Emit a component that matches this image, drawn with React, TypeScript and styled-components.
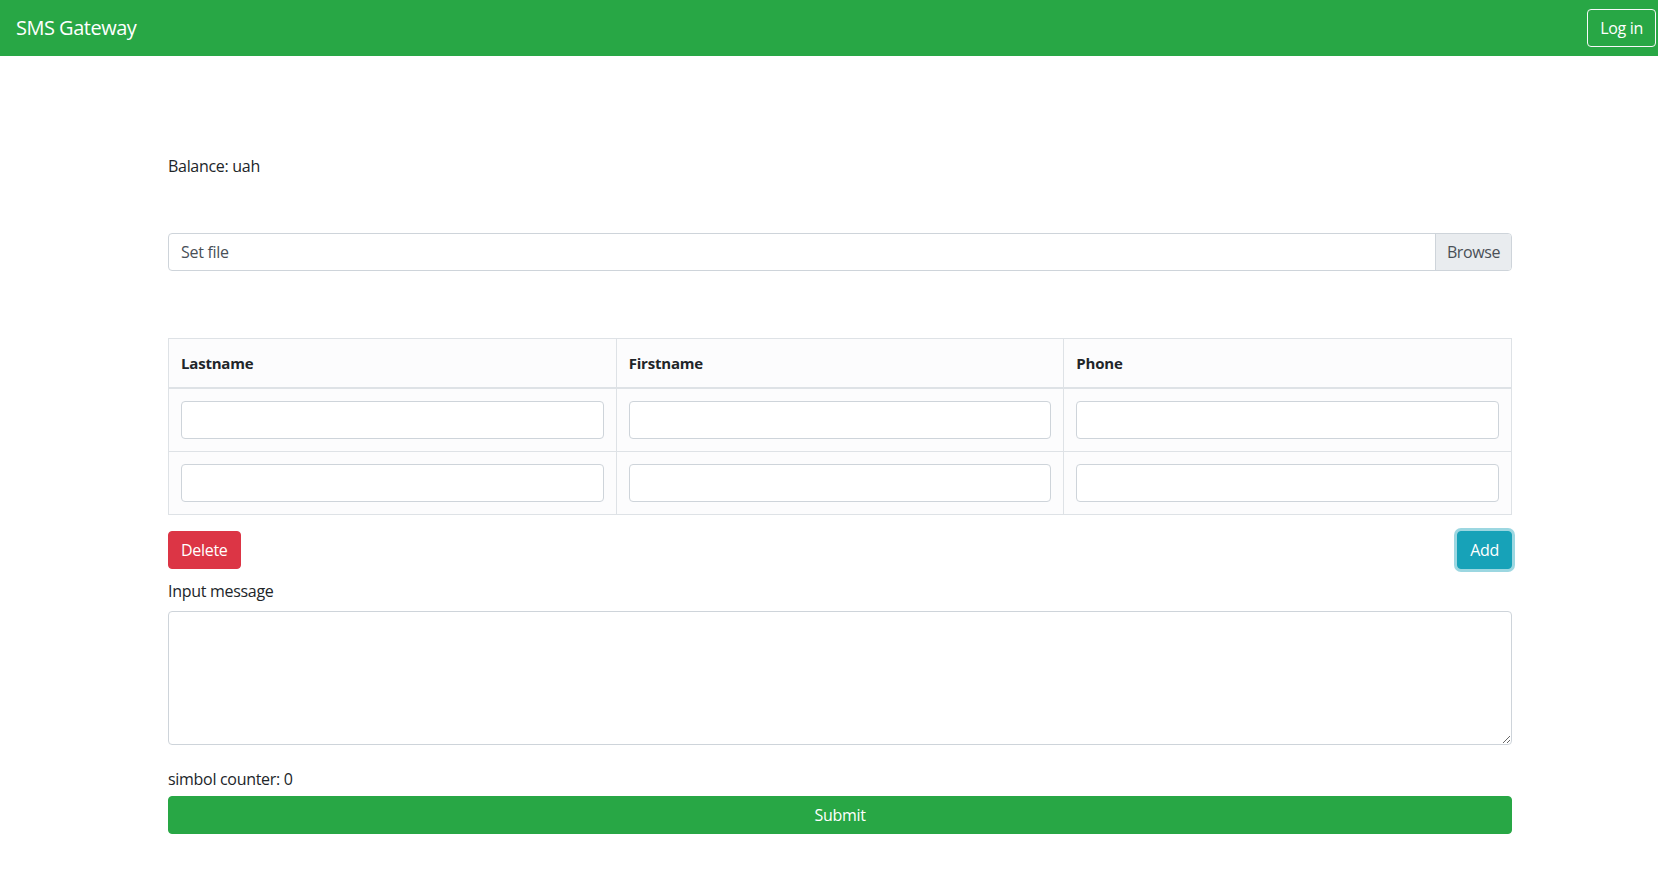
import React from "react";
import styled, { createGlobalStyle } from "styled-components";

const Global = createGlobalStyle`
  html, body { margin: 0; padding: 0; background: #fff; }
  body {
    font-family: "Open Sans", "Noto Sans", Arial, sans-serif;
    font-size: 16px;
    line-height: 1.5;
    color: #212529;
  }
  * { box-sizing: border-box; }
`;

const Navbar = styled.nav`
  height: 56px;
  background: #28a745;
  display: flex;
  align-items: center;
  justify-content: space-between;
  padding: 0 2px 0 16px;
`;

const Brand = styled.a`
  color: #fff;
  font-size: 20px;
  line-height: 30px;
  padding: 5px 0;
  text-decoration: none;
  letter-spacing: -0.5px;
`;

const OutlineButton = styled.button`
  font-family: inherit;
  height: 38px;
  padding: 0 12px;
  font-size: 16px;
  color: #fff;
  background: transparent;
  border: 1px solid #f8f9fa;
  border-radius: 4px;
  cursor: pointer;
  letter-spacing: -0.3px;
`;

const Container = styled.main`
  margin: 0 146px 0 168px;
  padding-top: 98px;
  display: flex;
  flex-direction: column;
`;

const Balance = styled.p`
  margin: 0 0 55px;
  font-size: 16px;
  line-height: 24px;
  letter-spacing: -0.3px;
`;

const FileField = styled.label`
  display: flex;
  height: 38px;
  border: 1px solid #ced4da;
  border-radius: 4px;
  overflow: hidden;
  color: #495057;
  margin-bottom: 67px;
  cursor: pointer;
`;

const FileText = styled.span`
  flex: 1;
  padding: 0 12px;
  line-height: 36px;
  letter-spacing: -0.3px;
`;

const FileButton = styled.span`
  width: 76px;
  background: #e9ecef;
  border-left: 1px solid #ced4da;
  line-height: 36px;
  text-align: center;
  letter-spacing: -0.4px;
`;

const Table = styled.table`
  width: 100%;
  border-collapse: collapse;
  table-layout: fixed;
  border: 1px solid #dee2e6;
  background: #fcfcfd;
  margin-bottom: 16px;
`;

const Th = styled.th`
  text-align: left;
  font-weight: 700;
  padding: 12px 12px;
  line-height: 24px;
  border: 1px solid #dee2e6;
  border-bottom-width: 2px;
  font-size: 15px;
  letter-spacing: -0.2px;
`;

const Td = styled.td`
  padding: 12px;
  border: 1px solid #dee2e6;
`;

const TextInput = styled.input`
  display: block;
  width: 100%;
  height: 38px;
  padding: 6px 12px;
  border: 1px solid #ced4da;
  border-radius: 4px;
  background: #fff;
  font-family: inherit;
  font-size: 16px;
  color: #495057;
`;

const ButtonRow = styled.div`
  display: flex;
  justify-content: space-between;
  align-items: center;
  margin-bottom: 10px;
`;

const SolidButton = styled.button<{ $bg: string; $ring?: string }>`
  font-family: inherit;
  height: 38px;
  padding: 0 12px;
  font-size: 16px;
  color: #fff;
  background: ${(p) => p.$bg};
  border: 1px solid ${(p) => p.$bg};
  border-radius: 4px;
  cursor: pointer;
  letter-spacing: -0.3px;
  box-shadow: ${(p) => (p.$ring ? `0 0 0 3px ${p.$ring}` : "none")};
`;

const Label = styled.label`
  display: block;
  margin-bottom: 8px;
  line-height: 24px;
  letter-spacing: -0.3px;
`;

const TextArea = styled.textarea`
  display: block;
  width: 100%;
  height: 134px;
  padding: 6px 12px;
  border: 1px solid #ced4da;
  border-radius: 4px;
  font-family: inherit;
  font-size: 16px;
  line-height: 24px;
  color: #495057;
  margin-bottom: 22px;
`;

const Counter = styled.p`
  margin: 0 0 5px;
  line-height: 24px;
  letter-spacing: -0.3px;
`;

const SubmitButton = styled.button`
  font-family: inherit;
  width: 100%;
  height: 38px;
  font-size: 16px;
  color: #fff;
  background: #28a745;
  border: 1px solid #28a745;
  border-radius: 4px;
  cursor: pointer;
  letter-spacing: -0.3px;
`;

const rows = [0, 1];

export default function App() {
  return (
    <>
      <Global />
      <Navbar>
        <Brand href="#">SMS Gateway</Brand>
        <OutlineButton>Log in</OutlineButton>
      </Navbar>
      <Container>
        <Balance>Balance: uah</Balance>
        <FileField>
          <FileText>Set file</FileText>
          <FileButton>Browse</FileButton>
        </FileField>
        <Table>
          <thead>
            <tr>
              <Th>Lastname</Th>
              <Th>Firstname</Th>
              <Th>Phone</Th>
            </tr>
          </thead>
          <tbody>
            {rows.map((r) => (
              <tr key={r}>
                <Td><TextInput /></Td>
                <Td><TextInput /></Td>
                <Td><TextInput /></Td>
              </tr>
            ))}
          </tbody>
        </Table>
        <ButtonRow>
          <SolidButton $bg="#dc3545">Delete</SolidButton>
          <SolidButton $bg="#17a2b8" $ring="rgba(58,176,195,0.5)">Add</SolidButton>
        </ButtonRow>
        <Label>Input message</Label>
        <TextArea rows={5} />
        <Counter>simbol counter: 0</Counter>
        <SubmitButton>Submit</SubmitButton>
      </Container>
    </>
  );
}
